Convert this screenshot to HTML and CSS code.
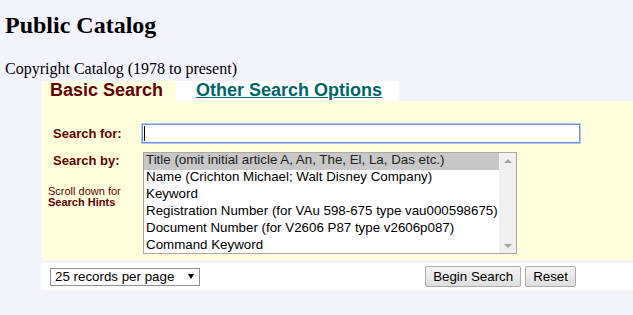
FILE: index.html
```html
<!DOCTYPE html>
<html lang="en">
<head>
    <meta charset="UTF-8">
    <meta name="viewport" content="width=device-width, initial-scale=1.0">
    <title>Public Catalog</title>
    <link rel="stylesheet" href="styles.css">
</head>
<body>
    <h1 class="page-title">Public Catalog</h1>
    <p class="subtitle">Copyright Catalog (1978 to present)</p>

    <form class="search-form" onsubmit="return false;">
        <div class="tabs">
            <div class="tab tab-active">Basic Search</div>
            <div class="tab tab-other"><a href="#">Other Search Options</a></div>
        </div>

        <div class="panel">
            <div class="row row-for">
                <label class="field-label" for="search-arg">Search for:</label>
                <div class="input-wrap">
                    <input type="text" id="search-arg" class="search-input">
                </div>
            </div>

            <div class="row row-by">
                <div class="label-col">
                    <span class="field-label">Search by:</span>
                    <p class="hint">Scroll down for<br><b>Search Hints</b></p>
                </div>
                <div class="listbox" role="listbox" aria-label="Search by">
                    <ul class="listbox-items">
                        <li class="listbox-item selected" role="option" aria-selected="true">Title (omit initial article A, An, The, El, La, Das etc.)</li>
                        <li class="listbox-item" role="option">Name (Crichton Michael; Walt Disney Company)</li>
                        <li class="listbox-item" role="option">Keyword</li>
                        <li class="listbox-item" role="option">Registration Number (for VAu 598-675 type vau000598675)</li>
                        <li class="listbox-item" role="option">Document Number (for V2606 P87 type v2606p087)</li>
                        <li class="listbox-item" role="option">Command Keyword</li>
                    </ul>
                    <div class="scrollbar">
                        <span class="arrow arrow-up"></span>
                        <span class="arrow arrow-down"></span>
                    </div>
                </div>
            </div>
        </div>

        <div class="actions">
            <div class="actions-inner">
                <div class="select-wrap">
                    <select class="per-page">
                        <option>25 records per page</option>
                        <option>50 records per page</option>
                        <option>100 records per page</option>
                    </select>
                </div>
                <div class="buttons">
                    <button type="submit" class="btn">Begin Search</button>
                    <button type="reset" class="btn">Reset</button>
                </div>
            </div>
        </div>
    </form>
</body>
</html>
```

FILE: styles.css
```css
:root {
    --page-bg: #f3f3fc;
    --panel-bg: #ffffdd;
    --label-color: #660000;
    --link-color: #006666;
}

* {
    box-sizing: border-box;
}

body {
    margin: 0;
    padding: 0 0 0 5px;
    background-color: var(--page-bg);
    color: #000;
    font-family: "Liberation Serif", "Times New Roman", serif;
}

.page-title {
    margin: 0;
    padding-top: 11px;
    font-size: 24px;
    line-height: 28px;
    font-weight: 700;
}

.subtitle {
    margin: 21px 0 0;
    font-size: 16px;
    line-height: 18px;
}

.search-form {
    margin: 3px 0 0 36px;
    font-family: "Liberation Sans", Arial, sans-serif;
}

/* tabs */
.tabs {
    display: flex;
    margin-left: 1px;
}

.tab {
    height: 20px;
    font-size: 18px;
    line-height: 18px;
    font-weight: 700;
}

.tab-active {
    width: 134px;
    padding-left: 8px;
    background-color: var(--panel-bg);
    color: var(--label-color);
}

.tab-other {
    width: 223px;
    padding-left: 20px;
    background-color: #fff;
}

.tab-other a {
    color: var(--link-color);
    text-decoration: underline;
}

/* yellow panel */
.panel {
    margin-left: 1px;
    padding: 23px 0 6px;
    background-color: var(--panel-bg);
}

.row {
    display: flex;
}

.row-for {
    align-items: center;
}

.row-by {
    margin-top: 9px;
    align-items: flex-start;
}

.field-label {
    display: block;
    width: 100px;
    padding-left: 11px;
    font-size: 13px;
    line-height: 15px;
    font-weight: 700;
    color: var(--label-color);
}

.label-col {
    width: 100px;
    padding-top: 1px;
}

.hint {
    margin: 18px 0 0 6px;
    font-size: 11px;
    line-height: 11px;
    color: var(--label-color);
}

.input-wrap {
    position: relative;
}

.input-wrap::after {
    content: "";
    position: absolute;
    left: 2px;
    top: 2px;
    width: 1px;
    height: 15px;
    background-color: #000;
}

.search-input {
    display: block;
    width: 438px;
    height: 19px;
    margin: 0;
    padding: 0 2px;
    border: 1px solid #6f97d8;
    box-shadow: 0 0 0 1px #aec7ee;
    background-color: #fff;
    font-family: inherit;
    font-size: 13px;
    outline: none;
}

/* list box */
.listbox {
    display: flex;
    width: 374px;
    height: 102px;
    margin-left: 1px;
    border: 1px solid #a9a9a9;
    background-color: #fff;
    overflow: hidden;
}

.listbox-items {
    flex: 1;
    margin: 0;
    padding: 0;
    list-style: none;
    font-size: 13.33px;
    line-height: 14px;
    color: #000;
    white-space: nowrap;
    overflow: hidden;
}

.listbox-item {
    padding: 0 2px;
    height: 17px;
}

.listbox-item.selected {
    background-color: #c8c8c8;
    color: #222;
}

.scrollbar {
    width: 17px;
    background-color: #f0f0f0;
    display: flex;
    flex-direction: column;
    justify-content: space-between;
    align-items: center;
    padding: 6px 0 5px;
}

.arrow {
    width: 0;
    height: 0;
    border-left: 4px solid transparent;
    border-right: 4px solid transparent;
}

.arrow-up {
    border-bottom: 4px solid #a3a3a3;
}

.arrow-down {
    border-top: 4px solid #a3a3a3;
}

/* bottom row */
.actions {
    margin-top: 3px;
    height: 27px;
    background-color: #fff;
    display: flex;
    align-items: center;
    padding-left: 9px;
}

.actions-inner {
    width: 526px;
    display: flex;
    align-items: center;
    justify-content: space-between;
}

.select-wrap {
    position: relative;
}

.select-wrap::after {
    content: "";
    position: absolute;
    left: 138px;
    top: 6px;
    border-left: 3.5px solid transparent;
    border-right: 3.5px solid transparent;
    border-top: 5px solid #000;
    pointer-events: none;
}

.per-page {
    display: block;
    width: 150px;
    height: 18px;
    margin: 0;
    padding: 0 0 0 4px;
    border: 1px solid #8f8f8f;
    border-radius: 0;
    background-color: #fff;
    color: #000;
    font-family: inherit;
    font-size: 13.33px;
    -webkit-appearance: none;
    appearance: none;
}

.buttons {
    display: flex;
    gap: 4px;
}

.btn {
    height: 21px;
    margin: 0;
    padding: 0 7px;
    border: 1px solid #adadad;
    border-radius: 2px;
    background: linear-gradient(#f5f5f5, #dedede);
    color: #000;
    font-family: inherit;
    font-size: 13.33px;
    cursor: pointer;
}
```
